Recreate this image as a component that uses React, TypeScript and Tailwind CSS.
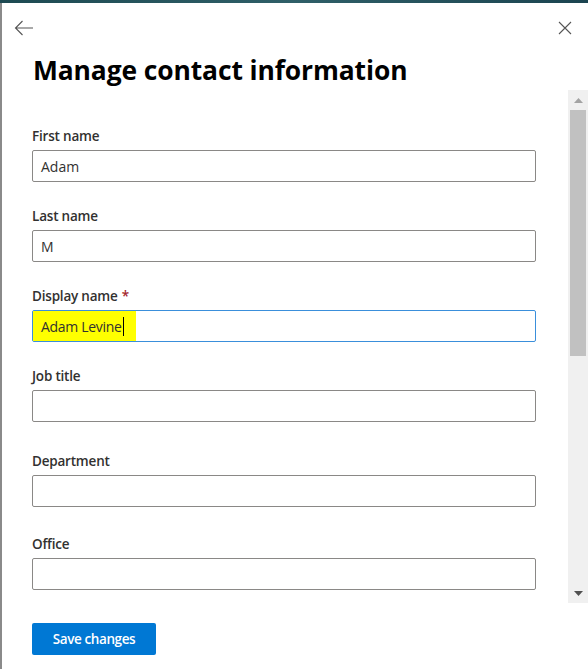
interface FieldProps {
  label: string
  value?: string
  required?: boolean
  focused?: boolean
  className?: string
}

function Field({ label, value = "", required, focused, className = "" }: FieldProps) {
  return (
    <div className={className}>
      <label className="block h-[20px] text-[13.5px] leading-[20px] font-semibold tracking-[-0.2px] text-[#323130]">
        {label}
        {required && <span className="ml-[4px] text-[#a4262c]">*</span>}
      </label>
      <div
        className={`mt-[4px] flex h-[32px] items-stretch rounded-[2px] border bg-white ${
          focused ? "border-[#3a8fdb]" : "border-[#8a8886]"
        }`}
      >
        {focused ? (
          <div className="flex items-center bg-[#ffff00] pl-[8px] pr-[12px] text-[14px] tracking-[-0.3px] text-[#323130]">
            <span>{value}</span>
            <span className="ml-[1px] h-[19px] w-px bg-black" />
          </div>
        ) : (
          <div className="flex items-center px-[8px] text-[14px] text-[#323130]">{value}</div>
        )}
      </div>
    </div>
  )
}

function Scrollbar() {
  return (
    <div className="flex h-full w-[20px] flex-col bg-[#f0f0f0]">
      <div className="flex h-[20px] items-center justify-center">
        <svg width="9" height="5" viewBox="0 0 9 5">
          <polygon points="0,5 9,5 4.5,0" fill="#a3a3a3" />
        </svg>
      </div>
      <div className="mx-[2px] h-[246px] bg-[#c1c1c1]" />
      <div className="flex-1" />
      <div className="flex h-[20px] items-center justify-center">
        <svg width="9" height="5" viewBox="0 0 9 5">
          <polygon points="0,0 9,0 4.5,5" fill="#505050" />
        </svg>
      </div>
    </div>
  )
}

export default function App() {
  return (
    <div
      className="flex h-[669px] w-[588px] flex-col overflow-hidden bg-white"
      style={{ fontFamily: '"Open Sans", "Noto Sans", sans-serif' }}
    >
      <div className="h-[3px] bg-gradient-to-r from-[#1d4a52] via-[#2f5f68] to-[#1b4450]" />
      <div className="flex flex-1 flex-col border-l-2 border-[#8a8a8a]">
        <div className="flex h-[50px] items-center justify-between pl-[12px] pr-[16px]">
          <svg width="20" height="16" viewBox="0 0 20 16" fill="none" stroke="#555" strokeWidth="1.1">
            <path d="M19 8H1.5M8.5 1L1.5 8l7 7" />
          </svg>
          <svg width="14" height="14" viewBox="0 0 14 14" fill="none" stroke="#555" strokeWidth="1.1">
            <path d="M1 1l12 12M13 1L1 13" />
          </svg>
        </div>
        <h1 className="pl-[31px] text-[26.4px] leading-[34px] font-bold tracking-[-0.1px] text-black">
          Manage contact information
        </h1>
        <div className="mt-[3px] flex h-[513px]">
          <div className="w-[534px] pl-[30px] pt-[36px]">
            <Field label="First name" value="Adam" />
            <Field label="Last name" value="M" className="mt-[24px]" />
            <Field label="Display name" value="Adam Levine" required focused className="mt-[24px]" />
            <Field label="Job title" className="mt-[24px]" />
            <Field label="Department" className="mt-[29px]" />
            <Field label="Office" className="mt-[27px]" />
          </div>
          <div className="ml-auto">
            <Scrollbar />
          </div>
        </div>
        <div className="pl-[30px] pt-[20px]">
          <button className="h-[32px] w-[124px] rounded-[2px] bg-[#0078d4] text-[13.5px] font-semibold tracking-[-0.4px] text-white">
            Save changes
          </button>
        </div>
      </div>
    </div>
  )
}
